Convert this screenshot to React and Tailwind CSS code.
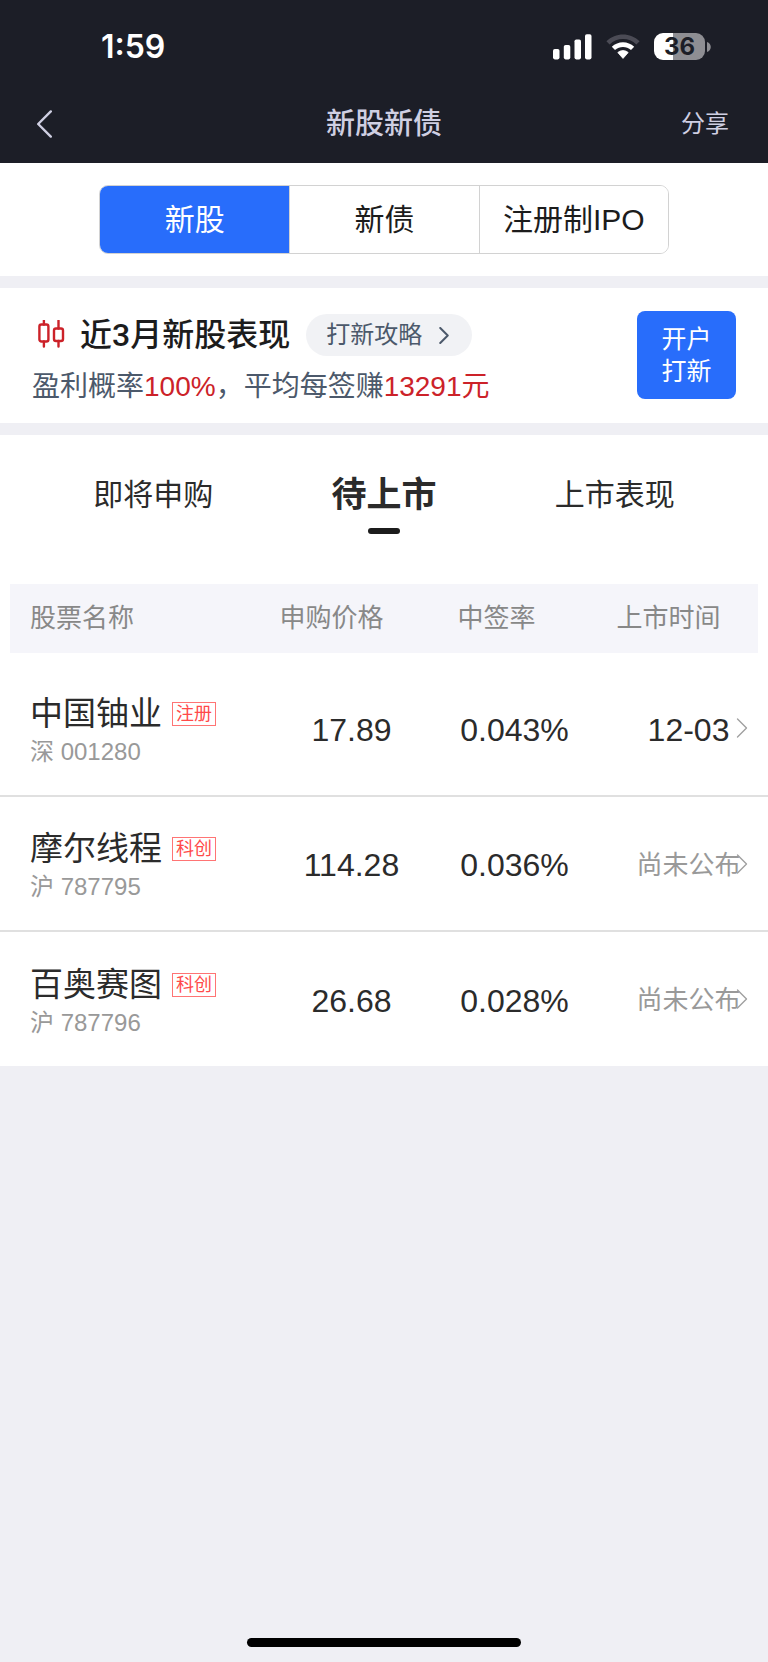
import { useState } from 'react';
import clsx from 'clsx';

const segments = ['新股', '新债', '注册制IPO'];
const tabs = ['即将申购', '待上市', '上市表现'];

const stocks = [
  { name: '中国铀业', tag: '注册', market: '深', code: '001280', price: '17.89', rate: '0.043%', date: '12-03' },
  { name: '摩尔线程', tag: '科创', market: '沪', code: '787795', price: '114.28', rate: '0.036%', date: null },
  { name: '百奥赛图', tag: '科创', market: '沪', code: '787796', price: '26.68', rate: '0.028%', date: null },
];

function SignalIcon() {
  return (
    <svg width="40" height="28" viewBox="0 0 40 28" fill="#fff" aria-hidden="true">
      <rect x="1" y="16" width="6.5" height="10.4" rx="1.8" />
      <rect x="11.8" y="12" width="6.5" height="14.4" rx="1.8" />
      <rect x="22.5" y="6.5" width="6.5" height="19.9" rx="1.8" />
      <rect x="33" y="1.2" width="6.5" height="25.2" rx="1.8" />
    </svg>
  );
}

function WifiIcon() {
  return (
    <svg width="34" height="28" viewBox="0 0 34 28" aria-hidden="true">
      <path d="M0.4 8.2C9.6 -0.8 24.4 -0.8 33.6 8.2L30.4 11.5C23 4.3 11 4.3 3.6 11.5Z" fill="#4b4b55" />
      <path d="M5.8 13.8C12 7.6 22 7.6 28.2 13.8L25 17.1C20.5 12.8 13.5 12.8 9 17.1Z" fill="#fff" />
      <path d="M11.8 19.6C14.7 16.9 19.3 16.9 22.2 19.6L17 25.4Z" fill="#fff" stroke="#fff" strokeWidth="0.8" strokeLinejoin="round" />
    </svg>
  );
}

function Battery() {
  return (
    <div className="flex items-center gap-[2px]">
      <div className="flex h-[27px] w-[51px] items-center justify-center rounded-[9px] bg-[linear-gradient(to_right,#fff_37%,#8e8e93_37%)] font-['Inter',sans-serif] text-[24px] leading-none font-bold text-[#1c1e27]">
        36
      </div>
      <svg width="4" height="10" viewBox="0 0 4 10" aria-hidden="true">
        <path d="M0 0C5 1.5 5 8.5 0 10Z" fill="#8e8e93" />
      </svg>
    </div>
  );
}

function CandleIcon() {
  return (
    <svg className="ml-[5px]" width="28" height="30" viewBox="0 1.5 28 30" fill="none" stroke="#cc2229" strokeWidth="2.4" strokeLinecap="round" aria-hidden="true">
      <rect x="2.4" y="6" width="9" height="17" rx="2" />
      <path d="M6.9 2V6M6.9 23V28" />
      <rect x="17" y="10" width="9" height="12.5" rx="2" />
      <path d="M21.5 2V10M21.5 22.5V28" />
    </svg>
  );
}

function Chevron({ className, strokeWidth = 2 }) {
  return (
    <svg className={className} viewBox="0 0 12 20" fill="none" stroke="currentColor" strokeWidth={strokeWidth} strokeLinecap="round" strokeLinejoin="round" aria-hidden="true">
      <path d="M1.5 1L10.5 10L1.5 19" />
    </svg>
  );
}

export default function App() {
  const [segment, setSegment] = useState('新股');
  const [tab, setTab] = useState('待上市');

  return (
    <div className="flex min-h-screen flex-col bg-[#efeff4] font-['Liberation_Sans','Noto_Sans_CJK_SC',sans-serif] text-[#2b2b2b]">
      {/* HEADER */}
      <header className="bg-[#1c1e27] text-[#cfcfe2]">
        <div className="flex h-[85px] items-center justify-between pt-2 pr-[57px] pl-[101px]">
          <span className="font-['Inter',sans-serif] text-[32px] leading-none font-semibold text-white">1:59</span>
          <div className="flex items-center gap-[14px]">
            <SignalIcon />
            <WifiIcon />
            <Battery />
          </div>
        </div>
        <div className="grid h-[78px] grid-cols-3 items-center px-9">
          <button type="button" aria-label="返回" className="justify-self-start">
            <Chevron className="h-7 w-[17px] rotate-180" strokeWidth={1.7} />
          </button>
          <h1 className="text-center text-[29px] leading-10 font-medium">新股新债</h1>
          <button type="button" className="justify-self-end pr-[3px] text-[24px] leading-9">分享</button>
        </div>
      </header>

      {/* SEGMENTED CONTROL */}
      <div className="bg-white px-[99px] pt-[22px] pb-[22px]">
        <div className="grid h-[69px] grid-cols-3 overflow-hidden rounded-[9px] border border-[#d2d2d2]">
          {segments.map((item, i) => (
            <button
              key={item}
              type="button"
              onClick={() => setSegment(item)}
              className={clsx(
                'text-[30px] leading-10 whitespace-nowrap',
                i > 0 && 'border-l border-[#d2d2d2]',
                segment === item ? 'bg-[#286dfb] text-white' : 'bg-white text-[#1c1c1c]'
              )}
            >
              {item}
            </button>
          ))}
        </div>
      </div>

      {/* RECENT PERFORMANCE */}
      <section className="mt-3 flex items-start justify-between bg-white pt-[23px] pr-8 pb-[18px] pl-8">
        <div className="flex flex-col gap-[10px]">
          <div className="flex items-center">
            <CandleIcon />
            <h2 className="ml-[15px] font-['Roboto','Noto_Sans_CJK_SC',sans-serif] text-[32px] leading-[48px] font-medium text-[#1c1c1c]">近3月新股表现</h2>
            <a href="#guide" className="ml-4 flex h-[42px] items-center gap-[17px] rounded-full bg-[#f1f2f5] pr-[23px] pl-5 text-[24px] text-[#4c596b]">
              打新攻略
              <Chevron className="h-[17px] w-[10px]" strokeWidth={2.4} />
            </a>
          </div>
          <p className="text-[28px] leading-9 text-[#4c596b]">
            盈利概率<span className="text-[#cc2229]">100%</span>，平均每签赚<span className="text-[#cc2229]">13291元</span>
          </p>
        </div>
        <button type="button" className="h-[88px] w-[99px] rounded-lg bg-[#286dfb] text-[25px] leading-8 text-white">
          开户<br />打新
        </button>
      </section>

      <main className="mt-3 bg-white">
        {/* TABS */}
        <div className="grid grid-cols-3 px-[38px] pt-8 pb-[50px]">
          {tabs.map((item) => (
            <button key={item} type="button" onClick={() => setTab(item)} className="flex flex-col items-center gap-[5px]">
              <span className={clsx('leading-[56px]', tab === item ? 'text-[35px] font-bold' : 'text-[30px]')}>{item}</span>
              <span className={clsx('h-[6px] w-8 rounded-full', tab === item && 'bg-[#1c1c1c]')} />
            </button>
          ))}
        </div>

        {/* STOCK TABLE */}
        <table className="w-full table-fixed border-collapse">
          <colgroup>
            <col className="w-[35%]" />
            <col className="w-[21%]" />
            <col className="w-[22%]" />
            <col className="w-[22%]" />
          </colgroup>
          <thead>
            <tr className="text-[26px] leading-[69px] text-[#888888]">
              <th className="p-0 pb-2 pl-[10px] text-left font-normal">
                <div className="bg-[#f5f5fa] pl-5">股票名称</div>
              </th>
              <th className="p-0 pb-2 font-normal">
                <div className="bg-[#f5f5fa] pr-9">申购价格</div>
              </th>
              <th className="p-0 pb-2 font-normal">
                <div className="bg-[#f5f5fa] pr-9">中签率</div>
              </th>
              <th className="p-0 pr-[10px] pb-2 font-normal">
                <div className="bg-[#f5f5fa] pr-5">上市时间</div>
              </th>
            </tr>
          </thead>
          <tbody>
            {stocks.map((stock) => (
              <tr key={stock.code} className="h-[135px] border-b-2 border-[#e0e0e0] text-center text-[32px] last:border-b-0">
                <td className="p-0 pt-[3px] pl-[30px] text-left">
                  <div className="flex items-center gap-[10px]">
                    <span className="text-[33px] leading-[44px]">{stock.name}</span>
                    <span className="border border-[#ff7474] px-[3px] text-[18px] leading-[22px] text-[#ff4a4a]">{stock.tag}</span>
                  </div>
                  <div className="text-[24px] leading-8 text-[#999999]">{stock.market} {stock.code}</div>
                </td>
                <td className="p-0 pt-[3px] pl-1">{stock.price}</td>
                <td className="p-0 pt-[3px]">{stock.rate}</td>
                <td className="relative p-0 pt-[3px] pl-[10px]">
                  {stock.date ?? <span className="block text-[26px] text-[#999999]">尚未公布</span>}
                  <Chevron className="absolute top-1/2 right-5 h-5 w-3 -translate-y-1/2 text-[#a0a0a0]" strokeWidth={1.4} />
                </td>
              </tr>
            ))}
          </tbody>
        </table>
      </main>

      {/* HOME INDICATOR */}
      <div className="mx-auto mt-auto mb-[15px] h-[9px] w-[274px] rounded-full bg-black" />
    </div>
  );
}
